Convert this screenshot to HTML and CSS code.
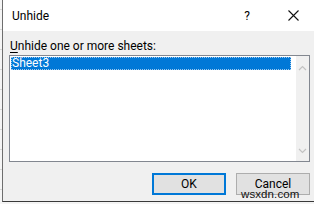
FILE: index.html
```html
<!DOCTYPE html>
<html>
<head>
<meta charset="utf-8">
<link rel="stylesheet" href="styles.css">
</head>
<body>
<div class="screen">
  <div class="strip"></div>
  <div class="dialog">
    <div class="titlebar">
      <span class="title">Unhide</span>
      <span class="help">?</span>
      <svg class="close" width="11" height="11" viewBox="0 0 11 11"><path d="M0.5 0.5 L10.5 10.5 M10.5 0.5 L0.5 10.5" stroke="#111" stroke-width="1.1" fill="none"/></svg>
    </div>
    <div class="content">
      <div class="label"><u>U</u>nhide one or more sheets:</div>
      <div class="listbox">
        <div class="items">
          <div class="item selected">Sheet3</div>
        </div>
        <div class="scrollbar">
          <svg width="9" height="6" viewBox="0 0 9 6"><path d="M1 5 L4.5 1.5 L8 5" stroke="#c2c2c2" stroke-width="1.2" fill="none"/></svg>
          <svg width="9" height="6" viewBox="0 0 9 6"><path d="M1 1 L4.5 4.5 L8 1" stroke="#c2c2c2" stroke-width="1.2" fill="none"/></svg>
        </div>
      </div>
      <div class="buttons">
        <button class="btn default">OK</button>
        <button class="btn">Cancel</button>
      </div>
    </div>
  </div>
  <div class="watermark">wsxdn.com</div>
</div>
</body>
</html>
```
FILE: styles.css
```css
html, body {
  margin: 0;
  padding: 0;
}
body {
  width: 314px;
  height: 204px;
  overflow: hidden;
  font-family: "Segoe UI", Roboto, "Noto Sans", sans-serif;
  font-size: 12px;
  color: #000;
}
.screen {
  position: relative;
  width: 314px;
  height: 204px;
  display: flex;
  background: #f4f4f4;
}
.strip {
  width: 2px;
  flex: none;
  background: repeating-linear-gradient(to bottom, #f5f5f5 0, #f5f5f5 9px, #d8d8d8 9px, #d8d8d8 10px, #f5f5f5 10px, #f5f5f5 20px);
}
.dialog {
  width: 311px;
  height: 201px;
  border-left: 1px solid #6e6e6e;
  border-bottom: 1px solid #3a3a3a;
  display: flex;
  flex-direction: column;
  background: #f0f0f0;
}
.titlebar {
  height: 31px;
  flex: none;
  background: #fff;
  display: flex;
  align-items: center;
}
.title {
  margin-left: 9px;
  font-size: 12px;
  flex: 1;
}
.help {
  font-size: 12px;
  margin-right: 38px;
}
.close {
  margin-right: 15px;
}
.content {
  flex: 1;
  display: flex;
  flex-direction: column;
  padding: 8px 4px 0 6px;
}
.label {
  height: 15px;
  line-height: 15px;
  margin-bottom: 1px;
  padding-left: 1px;
}
.label u {
  text-decoration-thickness: 1px;
  text-underline-offset: 2px;
}
.listbox {
  height: 105px;
  border: 1px solid #828790;
  background: #fff;
  display: flex;
}
.items {
  flex: 1;
  padding: 1px 5px 0 1px;
}
.item {
  height: 13px;
  line-height: 13px;
  padding-left: 1px;
}
.item.selected {
  background: #0078d7;
  color: #fff;
  outline: 1px dotted #9cc8ee;
  outline-offset: -1px;
}
.scrollbar {
  width: 13px;
  background: #f0f0f0;
  display: flex;
  flex-direction: column;
  justify-content: space-between;
  align-items: center;
  padding: 9px 0 7px;
}
.buttons {
  display: flex;
  justify-content: flex-end;
  gap: 10px;
  margin-top: 11px;
}
.btn {
  width: 74px;
  height: 22px;
  font-family: inherit;
  font-size: 12px;
  background: #e1e1e1;
  border: 1px solid #adadad;
  color: #000;
  padding: 0 0 1px;
  margin: 0;
}
.btn.default {
  border: 2px solid #0078d7;
}
.watermark {
  position: absolute;
  left: 241px;
  top: 189px;
  line-height: 10px;
  font-family: "Liberation Sans", sans-serif;
  font-size: 11.5px;
  color: #111;
  letter-spacing: 0.1px;
}
```
